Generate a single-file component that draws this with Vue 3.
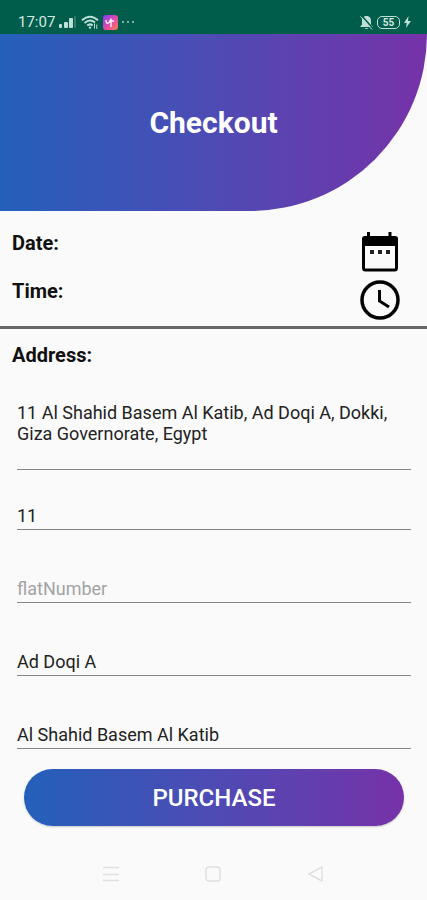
<script setup>
import { ref } from 'vue'

const address = ref('11 Al Shahid Basem Al Katib, Ad Doqi A, Dokki, Giza Governorate, Egypt')
const fields = ref([
  { id: 'building', label: 'Building number', value: '11', hint: '' },
  { id: 'flat', label: 'Flat number', value: '', hint: 'flatNumber' },
  { id: 'area', label: 'Area', value: 'Ad Doqi A', hint: '' },
  { id: 'street', label: 'Street', value: 'Al Shahid Basem Al Katib', hint: '' },
])
</script>

<template>
  <div class="screen">
    <div class="status">
      <div class="status-group">
        <span class="clock">17:07</span>
        <svg width="18" height="14" viewBox="0 0 18 14" aria-hidden="true">
          <g fill="#bfe0d8">
            <rect x="0" y="9" width="3" height="4" rx="1" />
            <rect x="5" y="7" width="4" height="6" rx="1" />
            <rect x="10" y="3" width="4" height="10" rx="1" />
            <rect x="15" y="1" width="2" height="12" rx="1" opacity=".25" />
          </g>
        </svg>
        <svg width="18" height="15" viewBox="0 0 18 15" fill="none" stroke="#bfe0d8" stroke-width="2" aria-hidden="true">
          <path d="M1 5.2Q9-1.8 17 5.2M3.6 8Q9 3.2 14 7.6M6.2 10.6Q9 8.2 11.6 10.4" />
          <circle cx="9" cy="12.6" r="1.2" fill="#bfe0d8" stroke="none" />
          <path d="M13.5 8.500v5M15.800 14V9.500" stroke-width="1" />
        </svg>
        <svg width="15" height="15" viewBox="0 0 15 15" aria-hidden="true">
          <defs>
            <linearGradient id="appFill" x1="0" y1="0" x2="1" y2="1">
              <stop offset="0" stop-color="#7a3df0" />
              <stop offset=".5" stop-color="#de49b0" />
              <stop offset="1" stop-color="#ff7c4d" />
            </linearGradient>
          </defs>
          <rect width="15" height="15" rx="3" fill="url(#appFill)" />
          <path d="M3 5.500Q3 9 5.500 8Q7.500 7 8 4M6.500 6h4M8 4.500v7" fill="none" stroke="#fff" stroke-width="1.300" stroke-linecap="round" />
        </svg>
        <svg width="12" height="4" viewBox="0 0 12 4" fill="#7db5a7" aria-hidden="true">
          <rect x="0" y="1" width="2" height="2" /><rect x="5" y="1" width="2" height="2" /><rect x="10" y="1" width="2" height="2" />
        </svg>
      </div>
      <div class="status-group">
        <svg width="13" height="15" viewBox="0 0 13 15" aria-hidden="true">
          <path d="M6.500 1C3 1 2 3.500 2 6v3.500L0 12h13l-2-2.500V6c0-2.500-1-5-4.500-5zM4.500 13h4q-2 2-4 0z" fill="#bfe0d8" />
          <path d="M1.500.500l11.500 13" stroke="#005c4b" stroke-width="1.500" />
          <path d="M.5 1.500l11.500 13" stroke="#bfe0d8" stroke-width="1" />
        </svg>
        <span class="battery">55</span>
        <svg width="7" height="12" viewBox="0 0 7 12" aria-hidden="true">
          <path d="M4.500 0L0 7h2.700L2 12l5-7H4z" fill="#bfe0d8" />
        </svg>
      </div>
    </div>

    <header class="hero"><h1>Checkout</h1></header>

    <main>
      <section class="schedule">
        <div class="row">
          <h2>Date:</h2>
          <button class="pick" type="button" aria-label="Pick a date">
            <svg width="40" height="40" viewBox="0 0 40 40">
              <path d="M8.500 0v6M30 0v6" stroke="#000" stroke-width="3" />
              <rect x="3.500" y="6" width="33" height="32" rx="2" fill="none" stroke="#000" stroke-width="3" />
              <path d="M2 7q0-3 3-3h30q3 0 3 3v7H2z" fill="#000" />
              <path d="M10 18h4v4h-4zM18 18h4v4h-4zM26 18h4v4h-4z" fill="#222" />
            </svg>
          </button>
        </div>
        <div class="row">
          <h2>Time:</h2>
          <button class="pick" type="button" aria-label="Pick a time">
            <svg width="40" height="40" viewBox="0 0 40 40" fill="none" stroke="#000">
              <circle cx="20" cy="20" r="18" stroke-width="3.500" />
              <path d="M19.500 10v11l9.500 6" stroke-width="3" />
            </svg>
          </button>
        </div>
      </section>

      <form class="form" @submit.prevent>
        <h2><label for="address">Address:</label></h2>
        <textarea id="address" v-model="address" class="line address" rows="2"></textarea>
        <div class="fields">
          <input
            v-for="f in fields"
            :id="f.id"
            :key="f.id"
            v-model="f.value"
            class="line"
            type="text"
            :aria-label="f.label"
            :placeholder="f.hint"
          />
        </div>
        <button class="purchase" type="submit">PURCHASE</button>
      </form>
    </main>

    <nav class="system" aria-label="System">
      <button type="button" aria-label="Recent apps">
        <svg width="18" height="18" viewBox="0 0 18 18"><path d="M1 2.500h16M1 9.500h16M1 15.500h16" /></svg>
      </button>
      <button type="button" aria-label="Home">
        <svg width="18" height="18" viewBox="0 0 18 18"><rect x="2" y="2" width="14" height="14" rx="3" /></svg>
      </button>
      <button type="button" aria-label="Back">
        <svg width="18" height="18" viewBox="0 0 18 18"><path d="M15 2v14L2 9z" stroke-linejoin="round" /></svg>
      </button>
    </nav>
  </div>
</template>

<style>
body {
  background: #fafafa;
}
</style>

<style scoped>
.screen {
  --brand: linear-gradient(90deg, #2460bb 0%, #4e4bb4 50%, #7632a8 100%);
  min-height: 100vh;
  display: flex;
  flex-direction: column;
  background: #fafafa;
  color: #111;
  font-family: Roboto, sans-serif;
}
button {
  border: 0;
  padding: 0;
  background: none;
  font-family: inherit;
  cursor: pointer;
}
svg {
  display: block;
}
.status {
  height: 34px;
  box-sizing: border-box;
  padding: 10px 16px 0 18px;
  display: flex;
  justify-content: space-between;
  background: #005c4b;
  color: #d3e9e3;
}
.status-group {
  display: flex;
  align-items: center;
  gap: 4px;
}
.clock {
  font-size: 15px;
  line-height: 24px;
}
.battery {
  box-sizing: border-box;
  width: 23px;
  height: 13px;
  border: 1px solid #bfe0d8;
  border-radius: 5px;
  font-size: 10px;
  line-height: 11px;
  font-weight: 700;
  text-align: center;
}
.hero {
  height: 177px;
  display: flex;
  align-items: center;
  justify-content: center;
  border-bottom-right-radius: 177px;
  background: var(--brand);
}
h1 {
  margin: 0;
  color: #fff;
  font-size: 30px;
  line-height: 36px;
  font-weight: 700;
}
h2 {
  margin: 0;
  font-size: 20px;
  line-height: 24px;
  font-weight: 700;
}
.schedule {
  display: flex;
  flex-direction: column;
  gap: 7px;
  padding: 20px 27px 6px 12px;
  border-bottom: 3px solid #666;
}
.row {
  display: flex;
  justify-content: space-between;
}
.pick {
  padding-top: 1px;
}
.form {
  display: flex;
  flex-direction: column;
  padding: 14px 16px 0 12px;
}
.line {
  display: block;
  box-sizing: border-box;
  width: 100%;
  margin: 0;
  padding: 0;
  border: 0;
  border-bottom: 1px solid #858585;
  border-radius: 0;
  outline: 0;
  background: none;
  color: #222;
  font-family: inherit;
  font-size: 18px;
  line-height: 21px;
}
.line::placeholder {
  color: #a3a3a3;
  opacity: 1;
}
.address {
  width: auto;
  height: 68px;
  margin: 35px 0 0 5px;
  resize: none;
  overflow: hidden;
}
.fields {
  display: flex;
  flex-direction: column;
  gap: 42px;
  padding: 29px 0 0 5px;
}
.fields .line {
  height: 31px;
  padding-top: 2px;
}
.purchase {
  height: 57px;
  margin: 20px 7px 0 12px;
  border-radius: 29px;
  background: var(--brand);
  box-shadow: 0 1px 2px #0003;
  color: #fff;
  font-size: 24px;
  font-weight: 500;
}
.system {
  margin-top: auto;
  padding: 0 60px 17px;
  display: flex;
  justify-content: space-around;
}
.system svg {
  fill: none;
  stroke: #e0e0e0;
  stroke-width: 1.5;
}
</style>
